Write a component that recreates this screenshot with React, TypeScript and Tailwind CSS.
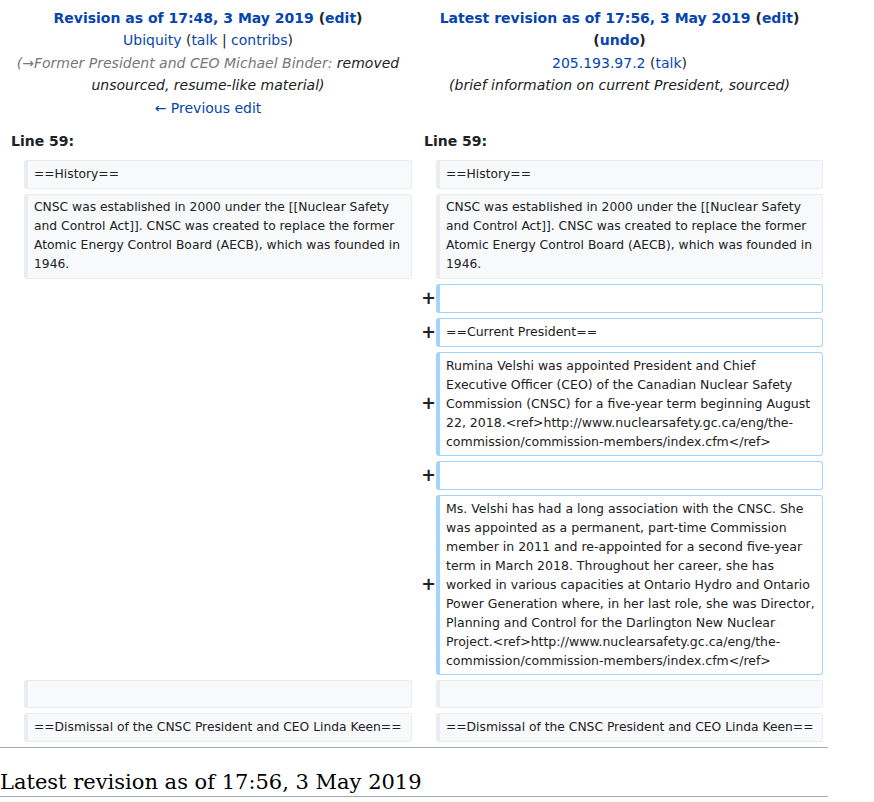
import React from "react";

const link = "text-[#0645ad]";

const ContextBox: React.FC<{ children?: React.ReactNode }> = ({ children }) => (
  <div className="min-h-[28.5px] rounded-[3px] border border-[#eaecf0] border-l-4 bg-[#f8f9fa] px-[6px] py-[3.5px] text-[12.3px] leading-[19px] text-[#202122] whitespace-pre-wrap break-words">
    {children ?? "\u00a0"}
  </div>
);

const AddedBox: React.FC<{ children?: React.ReactNode }> = ({ children }) => (
  <div className="min-h-[29px] rounded-[3px] border border-[#a3d3ff] border-l-4 bg-white px-[6px] py-[3.5px] text-[12.5px] leading-[19px] text-[#202122] whitespace-pre-wrap break-words">
    {children ?? "\u00a0"}
  </div>
);

const Plus: React.FC = () => (
  <div className="flex items-center justify-end text-[17.5px] font-bold leading-[1.2] text-[#202122] translate-x-[4px]">
    +
  </div>
);

const ContextRow: React.FC<{ text?: string }> = ({ text }) => (
  <>
    <div />
    <ContextBox>{text}</ContextBox>
    <div />
    <ContextBox>{text}</ContextBox>
  </>
);

const AddedRow: React.FC<{ text?: string }> = ({ text }) => (
  <>
    <div className="col-span-2" />
    <Plus />
    <AddedBox>{text}</AddedBox>
  </>
);

const App: React.FC = () => {
  return (
    <div className="w-[828px] bg-white text-[#202122] font-['DejaVu_Sans',sans-serif]">
      <div className="grid grid-cols-[16px_388px_16px_387px] gap-x-[4px] gap-y-[5px] px-[4px] pt-[4px] pb-[2px]">
        {/* old revision header */}
        <div className="col-span-2 py-[3px] text-center text-[14px] leading-[1.6]">
          <div className="font-bold">
            <span className={link}>Revision as of 17:48, 3 May 2019</span> (<span className={link}>edit</span>)
          </div>
          <div>
            <span className={link}>Ubiquity</span> (<span className={link}>talk</span> |{" "}
            <span className={link}>contribs</span>)
          </div>
          <div className="italic">
            <span className="text-[#72777d]">(→Former President and CEO Michael Binder: </span> removed unsourced,
            resume-like material)
          </div>
          <div>
            <span className={link}>← Previous edit</span>
          </div>
        </div>
        {/* new revision header */}
        <div className="col-span-2 py-[3px] text-center text-[14px] leading-[1.6]">
          <div className="font-bold">
            <span className={link}>Latest revision as of 17:56, 3 May 2019</span> (<span className={link}>edit</span>){" "}
            (<span className={link}>undo</span>)
          </div>
          <div>
            <span className={link}>205.193.97.2</span> (<span className={link}>talk</span>)
          </div>
          <div className="italic">(brief information on current President, sourced)</div>
        </div>

        <div className="col-span-2 pt-[3px] pb-[3px] pl-[7px] text-[14px] font-bold leading-[1.6]">Line 59:</div>
        <div className="col-span-2 pt-[3px] pb-[3px] pl-[8px] text-[14px] font-bold leading-[1.6]">Line 59:</div>

        <ContextRow text="==History==" />
        <ContextRow text="CNSC was established in 2000 under the [[Nuclear Safety and Control Act]]. CNSC was created to replace the former Atomic Energy Control Board (AECB), which was founded in 1946." />
        <AddedRow />
        <AddedRow text="==Current President==" />
        <AddedRow text="Rumina Velshi was appointed President and Chief Executive Officer (CEO) of the Canadian Nuclear Safety Commission (CNSC) for a five-year term beginning August 22, 2018.<ref>http://www.nuclearsafety.gc.ca/eng/the-commission/commission-members/index.cfm</ref>" />
        <AddedRow />
        <AddedRow text="Ms. Velshi has had a long association with the CNSC. She was appointed as a permanent, part-time Commission member in 2011 and re-appointed for a second five-year term in March 2018. Throughout her career, she has worked in various capacities at Ontario Hydro and Ontario Power Generation where, in her last role, she was Director, Planning and Control for the Darlington New Nuclear Project.<ref>http://www.nuclearsafety.gc.ca/eng/the-commission/commission-members/index.cfm</ref>" />
        <ContextRow />
        <ContextRow text="==Dismissal of the CNSC President and CEO Linda Keen==" />
      </div>

      <hr className="my-[2.8px] h-px border-0 bg-[#a2a9b1]" />

      <h2 className="mt-[21px] mb-[5px] border-b border-[#a2a9b1] font-['DejaVu_Serif',serif] text-[21px] font-normal leading-[1.3] text-[#000]">
        Latest revision as of 17:56, 3 May 2019
      </h2>
    </div>
  );
};

export default App;
